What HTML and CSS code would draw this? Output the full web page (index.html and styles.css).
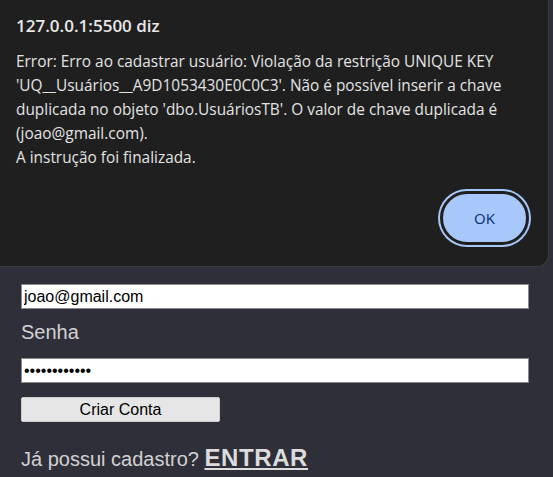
FILE: index.html
```html
<!DOCTYPE html>
<html lang="pt-BR">
<head>
<meta charset="utf-8">
<title>Cadastro</title>
<link rel="stylesheet" href="styles.css">
</head>
<body>
<main class="page">
  <form class="form">
    <h1 class="form-title">Cadastro</h1>
    <label class="label">Email</label>
    <input class="field" type="email" value="joao@gmail.com">
    <label class="label">Senha</label>
    <input class="field" type="password" value="123456789012">
    <button class="submit" type="button">Criar Conta</button>
    <p class="login">Já possui cadastro? <a class="login-link" href="#">ENTRAR</a></p>
  </form>
</main>
<div class="dialog" role="alertdialog">
  <div class="dialog-title">127.0.0.1:5500 diz</div>
  <div class="dialog-body">Error: Erro ao cadastrar usuário: Violação da restrição UNIQUE KEY 'UQ__Usuários__A9D1053430E0C0C3'. Não é possível inserir a chave duplicada no objeto 'dbo.UsuáriosTB'. O valor de chave duplicada é (joao@gmail.com).<br>A instrução foi finalizada.</div>
  <div class="dialog-actions">
    <button class="ok" type="button">OK</button>
  </div>
</div>
</body>
</html>
```
FILE: styles.css
```css
html, body {
  margin: 0;
  padding: 0;
}
body {
  background: #2f2f3a;
  font-family: "Liberation Sans", Arial, sans-serif;
  height: 477px;
  overflow: hidden;
}
.page {
  padding: 0 24px 0 21px;
}
.form {
  display: flex;
  flex-direction: column;
  align-items: flex-start;
  padding-top: 205px;
}
.form-title {
  margin: 0 0 10px;
  font-size: 28px;
  color: #ddd;
}
.label {
  display: block;
  color: #d2d2d2;
  font-size: 20px;
  line-height: 23px;
  margin: 12px 0 14px;
}
.form-title + .label {
  margin-top: 0;
}
.field {
  box-sizing: border-box;
  width: 508px;
  height: 25px;
  margin: 0;
  padding: 1px 2px;
  border: 1px solid #8a8a8a;
  background: #fff;
  font-family: "Liberation Sans", Arial, sans-serif;
  font-size: 16px;
  color: #000;
  outline: none;
}
.submit {
  box-sizing: border-box;
  width: 199px;
  height: 25px;
  margin-top: 14px;
  padding: 0;
  border: 1px solid #cfcfcf;
  border-radius: 2px;
  background: #e6e6e6;
  font-family: "Liberation Sans", Arial, sans-serif;
  font-size: 16px;
  color: #000;
}
.login {
  margin: 22px 0 0;
  font-size: 20px;
  line-height: 28px;
  color: #d2d2d2;
}
.login-link {
  font-size: 24px;
  font-weight: bold;
  letter-spacing: 0.6px;
  color: #dcdcdc;
  text-decoration: underline;
}
.dialog {
  position: absolute;
  left: 0;
  top: 0;
  box-sizing: border-box;
  width: 549px;
  height: 267px;
  background: #1f1f1f;
  border: 1px solid #3d3d3d;
  border-top: none;
  border-left: none;
  border-bottom-right-radius: 12px;
  padding: 14px 18px 0 16px;
  font-family: "Open Sans", "Noto Sans", sans-serif;
  color: #e3e3e3;
}
.dialog-title {
  font-size: 17px;
  font-weight: 600;
  line-height: 24px;
  color: #e8e8e8;
}
.dialog-body {
  margin-top: 12px;
  font-size: 15.4px;
  line-height: 24px;
}
.dialog-actions {
  display: flex;
  justify-content: flex-end;
  margin-top: 21px;
  padding-right: 1px;
}
.ok {
  box-sizing: border-box;
  width: 89px;
  height: 54px;
  border-radius: 27px;
  background: #a8c7fa;
  border: 3px solid #1f1f1f;
  box-shadow: 0 0 0 2px #a8c7fa;
  font-family: "Open Sans", "Noto Sans", sans-serif;
  font-size: 15px;
  color: #062e6f;
  padding: 0;
}
```
